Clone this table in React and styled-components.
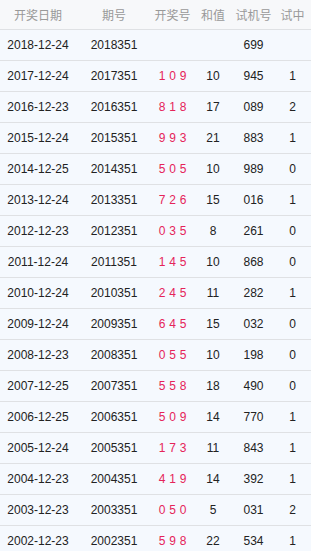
import React from 'react';
import styled, { createGlobalStyle } from 'styled-components';

const GlobalStyle = createGlobalStyle`
    body {
        margin: 0;
        background: #f5f9fe;
        font-family: "Liberation Sans", Arial, "Noto Sans CJK SC", sans-serif;
    }
`;

const Table = styled.div`
    width: 311px;
    overflow: hidden;
`;

const Row = styled.div`
    display: grid;
    grid-template-columns: 76px 76px 41px 40px 41px 37px;
    align-items: center;
    height: ${(p) => (p.$head ? '29px' : '30px')};
    border-bottom: 1px solid #dfe1e4;
    background: ${(p) => (p.$head ? '#f7f8fa' : '#f5f9fe')};
`;

const Cell = styled.span`
    text-align: center;
    font-size: 12px;
    white-space: nowrap;
    color: ${(p) => (p.$head ? '#999' : '#222')};
`;

const Balls = styled.span`
    text-align: center;
    font-size: 12px;
    color: #e5245a;
    word-spacing: 0.5px;
    white-space: nowrap;
`;

const rows = [
    ['2018-12-24', '2018351', '', '', '699', ''],
    ['2017-12-24', '2017351', '1 0 9', '10', '945', '1'],
    ['2016-12-23', '2016351', '8 1 8', '17', '089', '2'],
    ['2015-12-24', '2015351', '9 9 3', '21', '883', '1'],
    ['2014-12-25', '2014351', '5 0 5', '10', '989', '0'],
    ['2013-12-24', '2013351', '7 2 6', '15', '016', '1'],
    ['2012-12-23', '2012351', '0 3 5', '8', '261', '0'],
    ['2011-12-24', '2011351', '1 4 5', '10', '868', '0'],
    ['2010-12-24', '2010351', '2 4 5', '11', '282', '1'],
    ['2009-12-24', '2009351', '6 4 5', '15', '032', '0'],
    ['2008-12-23', '2008351', '0 5 5', '10', '198', '0'],
    ['2007-12-25', '2007351', '5 5 8', '18', '490', '0'],
    ['2006-12-25', '2006351', '5 0 9', '14', '770', '1'],
    ['2005-12-24', '2005351', '1 7 3', '11', '843', '1'],
    ['2004-12-23', '2004351', '4 1 9', '14', '392', '1'],
    ['2003-12-23', '2003351', '0 5 0', '5', '031', '2'],
    ['2002-12-23', '2002351', '5 9 8', '22', '534', '1'],
];

const heads = ['开奖日期', '期号', '开奖号', '和值', '试机号', '试中'];

function App() {
    return (
        <Table>
            <GlobalStyle />
            <Row $head>
                {heads.map((h) => (
                    <Cell $head key={h}>{h}</Cell>
                ))}
            </Row>
            {rows.map((r) => (
                <Row key={r[1]}>
                    <Cell>{r[0]}</Cell>
                    <Cell>{r[1]}</Cell>
                    <Balls>{r[2]}</Balls>
                    <Cell>{r[3]}</Cell>
                    <Cell>{r[4]}</Cell>
                    <Cell>{r[5]}</Cell>
                </Row>
            ))}
        </Table>
    );
}

export default App;
